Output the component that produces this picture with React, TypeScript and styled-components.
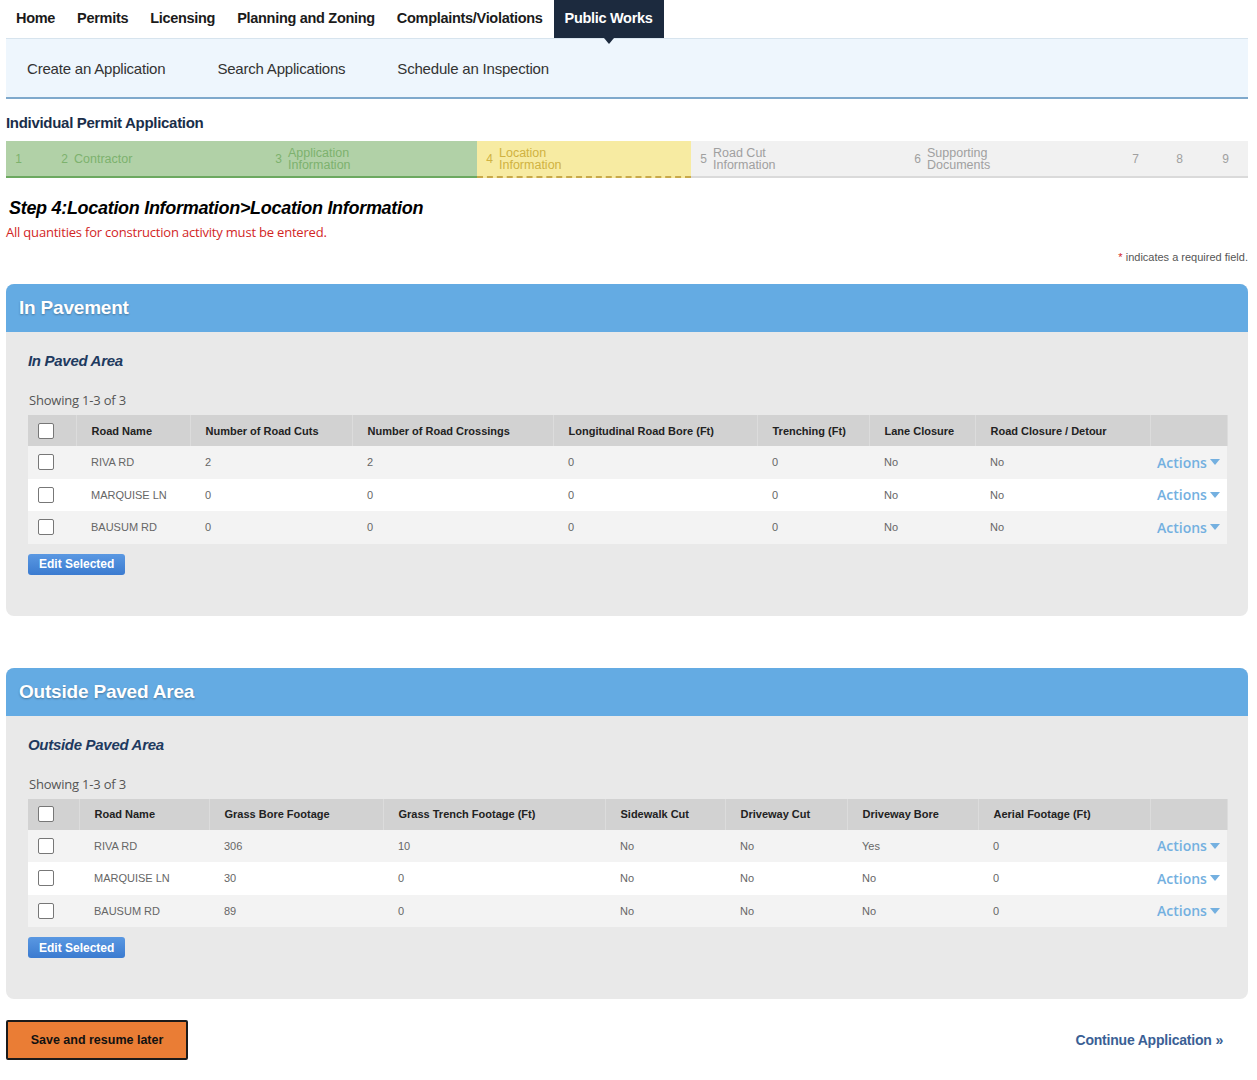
import React from "react";
import styled, { createGlobalStyle } from "styled-components";

const Global = createGlobalStyle`
  body { margin: 0; background: #fff; font-family: Arial, "Liberation Sans", sans-serif; color: #222; }
`;

const Page = styled.div`
  width: 1242px;
  margin-left: 6px;
`;

const TopNav = styled.nav`
  display: flex;
  height: 38px;
  align-items: stretch;
  padding-left: 0;
  border-bottom: 1px solid #d7e4ee;
`;

const TopItem = styled.a<{ $active?: boolean }>`
  position: relative;
  display: flex;
  align-items: center;
  padding: 0 11px 2px 11px;
  font-size: 14.5px;
  font-weight: bold;
  color: ${({ $active }) => ($active ? "#fff" : "#1b1b1b")};
  background: ${({ $active }) => ($active ? "#1c2a3e" : "transparent")};
  letter-spacing: -0.3px;
  &:first-child { padding-left: 10px; }
  ${({ $active }) =>
    $active &&
    `&:after{content:"";position:absolute;left:50%;bottom:-6px;margin-left:-5px;border:5px solid transparent;border-top:6px solid #1c2a3e;border-bottom:0;}`}
`;

const SubNav = styled.div`
  display: flex;
  gap: 52px;
  height: 58px;
  align-items: center;
  padding-left: 21px;
  background: #eef6fd;
  border-bottom: 2px solid #7fa9cc;
  font-size: 15px;
  color: #333;
  letter-spacing: -0.2px;
`;

const AppTitle = styled.div`
  margin-top: 15px;
  font-size: 15px;
  font-weight: bold;
  color: #1a2e4a;
  letter-spacing: -0.3px;
`;

const StepBar = styled.div`
  display: flex;
  height: 37px;
  margin-top: 10px;
  font-size: 12.5px;
  line-height: 12px;
`;

const Seg = styled.div<{ $w: number; $kind: "done" | "cur" | "todo" }>`
  display: flex;
  align-items: center;
  width: ${({ $w }) => $w}px;
  background: ${({ $kind }) => ($kind === "done" ? "#b1d1a7" : $kind === "cur" ? "#f7eba2" : "#f1f1f1")};
  border-bottom: ${({ $kind }) =>
    $kind === "done" ? "2px solid #6ca960" : $kind === "cur" ? "2px dashed #c8a94a" : "2px solid #dadada"};
  color: ${({ $kind }) => ($kind === "done" ? "#7db26e" : $kind === "cur" ? "#d0b241" : "#a0a0a0")};
`;

const Step = styled.div<{ $w: number }>`
  display: flex;
  align-items: center;
  gap: 6px;
  width: ${({ $w }) => $w}px;
  flex-shrink: 0;
`;

const Num = styled.span`
  font-size: 12px;
  text-align: right;
  width: 16px;
`;

const StepHead = styled.h2`
  margin: 20px 0 0 3px;
  font-size: 18px;
  font-style: italic;
  font-weight: bold;
  color: #000;
  letter-spacing: -0.3px;
`;

const RedNote = styled.div`
  margin-top: 4px;
  font-size: 13px;
  color: #d2261f;
  font-family: "Open Sans", sans-serif;
  letter-spacing: -0.2px;
`;

const ReqNote = styled.div`
  text-align: right;
  font-size: 11px;
  color: #555;
  margin-top: 10px;
`;

const Panel = styled.section<{ $top: number }>`
  margin-top: ${({ $top }) => $top}px;
  background: #e9e9e9;
  border-radius: 8px;
  padding-bottom: 41px;
`;

const PanelHead = styled.div`
  height: 48px;
  display: flex;
  align-items: center;
  padding-left: 13px;
  background: #64abe3;
  border-radius: 8px 8px 0 0;
  color: #fff;
  font-size: 19px;
  font-weight: bold;
  letter-spacing: -0.2px;
  text-shadow: 0 1px 2px rgba(0, 0, 0, 0.3);
`;

const SubTitle = styled.div`
  margin: 20px 0 0 22px;
  font-size: 15px;
  font-style: italic;
  font-weight: bold;
  color: #1e3a5f;
  letter-spacing: -0.3px;
`;

const Showing = styled.div`
  margin: 22px 0 6px 23px;
  font-size: 13px;
  color: #555;
  font-family: "Open Sans", sans-serif;
  letter-spacing: -0.2px;
`;

const Table = styled.table`
  margin-left: 22px;
  width: 1199px;
  border-collapse: collapse;
  table-layout: fixed;
  font-size: 11px;
`;

const Th = styled.th`
  height: 31px;
  background: #d2d2d2;
  text-align: left;
  padding: 0 0 0 15px;
  font-weight: bold;
  color: #222;
  border-right: 1px solid #dcdcdc;
`;

const Row = styled.tr<{ $odd: boolean }>`
  background: ${({ $odd }) => ($odd ? "#f3f3f3" : "#fff")};
`;

const Td = styled.td`
  height: 32.5px;
  padding: 0 0 0 15px;
  color: #666;
`;

const Box = styled.span`
  display: inline-block;
  width: 14px;
  height: 14px;
  border: 1px solid #777;
  border-radius: 2px;
  background: #fff;
  vertical-align: middle;
  margin-left: -5px;
`;

const Actions = styled.span`
  display: inline-flex;
  align-items: center;
  gap: 3px;
  margin-left: -8px;
  font-size: 14px;
  font-weight: 600;
  color: #74b0e0;
  font-family: "Open Sans", sans-serif;
`;

const EditBtn = styled.button`
  margin: 10px 0 0 22px;
  height: 21px;
  padding: 0 11px;
  border: 0;
  border-radius: 3px;
  background: linear-gradient(#5a98e2, #3b7bd0);
  color: #fff;
  font-weight: bold;
  font-size: 12px;
  font-family: Arial, "Liberation Sans", sans-serif;
`;

const Footer = styled.div`
  display: flex;
  justify-content: space-between;
  align-items: center;
  margin-top: 21px;
  padding-right: 25px;
`;

const SaveBtn = styled.button`
  height: 40px;
  width: 182px;
  background: #ea7d35;
  border: 2px solid #1a1a1a;
  border-radius: 2px;
  font-weight: bold;
  font-size: 12.5px;
  color: #111;
  font-family: Arial, "Liberation Sans", sans-serif;
`;

const Continue = styled.a`
  font-size: 14px;
  font-weight: bold;
  color: #3a5f95;
  letter-spacing: -0.2px;
`;

const Caret = () => (
  <svg width="10" height="6" viewBox="0 0 10 6">
    <path d="M0 0h10L5 6z" fill="#74b0e0" />
  </svg>
);

type TableSpec = { title: string; sub: string; widths: number[]; heads: string[]; rows: string[][]; top: number };

const tables: TableSpec[] = [
  {
    title: "In Pavement",
    sub: "In Paved Area",
    top: 21,
    widths: [48, 114, 162, 201, 204, 112, 106, 175, 77],
    heads: ["Road Name", "Number of Road Cuts", "Number of Road Crossings", "Longitudinal Road Bore (Ft)", "Trenching (Ft)", "Lane Closure", "Road Closure / Detour"],
    rows: [
      ["RIVA RD", "2", "2", "0", "0", "No", "No"],
      ["MARQUISE LN", "0", "0", "0", "0", "No", "No"],
      ["BAUSUM RD", "0", "0", "0", "0", "No", "No"],
    ],
  },
  {
    title: "Outside Paved Area",
    sub: "Outside Paved Area",
    top: 52,
    widths: [51, 130, 174, 222, 120, 122, 131, 172, 77],
    heads: ["Road Name", "Grass Bore Footage", "Grass Trench Footage (Ft)", "Sidewalk Cut", "Driveway Cut", "Driveway Bore", "Aerial Footage (Ft)"],
    rows: [
      ["RIVA RD", "306", "10", "No", "No", "Yes", "0"],
      ["MARQUISE LN", "30", "0", "No", "No", "No", "0"],
      ["BAUSUM RD", "89", "0", "No", "No", "No", "0"],
    ],
  },
];

const DataPanel = ({ t }: { t: TableSpec }) => (
  <Panel $top={t.top}>
    <PanelHead>{t.title}</PanelHead>
    <SubTitle>{t.sub}</SubTitle>
    <Showing>Showing 1-3 of 3</Showing>
    <Table>
      <colgroup>
        {t.widths.map((w, i) => (
          <col key={i} style={{ width: w }} />
        ))}
      </colgroup>
      <thead>
        <tr>
          <Th><Box /></Th>
          {t.heads.map((h) => (
            <Th key={h}>{h}</Th>
          ))}
          <Th />
        </tr>
      </thead>
      <tbody>
        {t.rows.map((r, i) => (
          <Row key={i} $odd={i % 2 === 0}>
            <Td><Box /></Td>
            {r.map((c, j) => (
              <Td key={j}>{c}</Td>
            ))}
            <Td><Actions>Actions <Caret /></Actions></Td>
          </Row>
        ))}
      </tbody>
    </Table>
    <EditBtn>Edit Selected</EditBtn>
  </Panel>
);

export default function App() {
  return (
    <Page>
      <Global />
      <TopNav>
        <TopItem>Home</TopItem>
        <TopItem>Permits</TopItem>
        <TopItem>Licensing</TopItem>
        <TopItem>Planning and Zoning</TopItem>
        <TopItem>Complaints/Violations</TopItem>
        <TopItem $active>Public Works</TopItem>
      </TopNav>
      <SubNav>
        <span>Create an Application</span>
        <span>Search Applications</span>
        <span>Schedule an Inspection</span>
      </SubNav>
      <AppTitle>Individual Permit Application</AppTitle>
      <StepBar>
        <Seg $w={471} $kind="done">
          <Step $w={46}><Num>1</Num></Step>
          <Step $w={214}><Num>2</Num>Contractor</Step>
          <Step $w={200}><Num>3</Num><span>Application<br />Information</span></Step>
        </Seg>
        <Seg $w={214} $kind="cur">
          <Step $w={210}><Num>4</Num><span>Location<br />Information</span></Step>
        </Seg>
        <Seg $w={557} $kind="todo">
          <Step $w={214}><Num>5</Num><span>Road Cut<br />Information</span></Step>
          <Step $w={218}><Num>6</Num><span>Supporting<br />Documents</span></Step>
          <Step $w={44}><Num>7</Num></Step>
          <Step $w={46}><Num>8</Num></Step>
          <Step $w={30}><Num>9</Num></Step>
        </Seg>
      </StepBar>
      <StepHead>Step 4:Location Information&gt;Location Information</StepHead>
      <RedNote>All quantities for construction activity must be entered.</RedNote>
      <ReqNote><span style={{ color: "#d2261f" }}>*</span> indicates a required field.</ReqNote>
      {tables.map((t) => (
        <DataPanel key={t.title} t={t} />
      ))}
      <Footer>
        <SaveBtn>Save and resume later</SaveBtn>
        <Continue>Continue Application »</Continue>
      </Footer>
    </Page>
  );
}
